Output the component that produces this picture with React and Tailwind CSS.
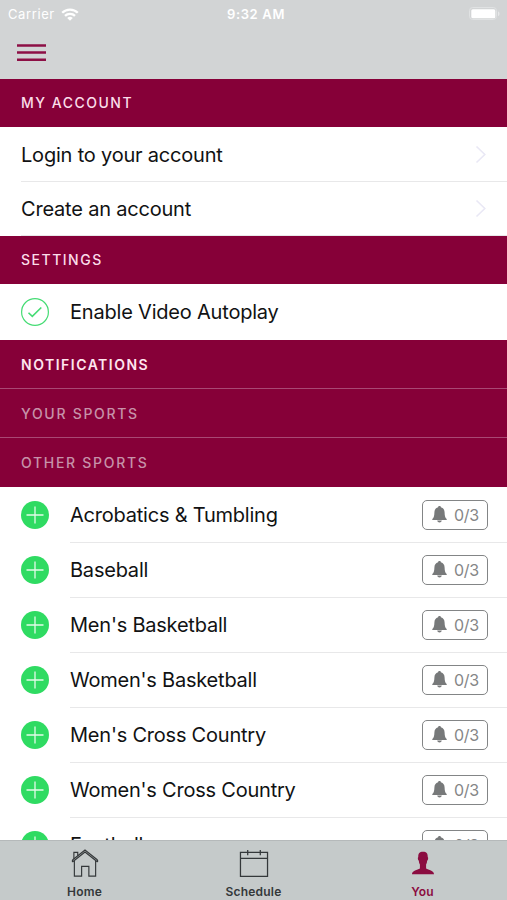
const sports = [
  "Acrobatics & Tumbling",
  "Baseball",
  "Men's Basketball",
  "Women's Basketball",
  "Men's Cross Country",
  "Women's Cross Country",
  "Football",
];

function StatusBar() {
  return (
    <div className="grid h-7 grid-cols-3 items-center pl-2 pr-[7px] text-[13px] text-white">
      <div className="flex items-center gap-[6px]">
        <span className="tracking-[0.6px]">Carrier</span>
        <svg width="18" height="13" viewBox="0 0 18 13" fill="none" stroke="white" strokeWidth="2.3">
          <path d="M1.2 4.8a11 11 0 0 1 15.6 0" />
          <path d="M4 7.9a7 7 0 0 1 10 0" />
          <path d="M6.2 10.1a4 4 0 0 1 5.6 0L9 12.8z" fill="white" stroke="none" />
        </svg>
      </div>
      <span className="pl-1 text-center font-semibold tracking-[0.65px]">9:32 AM</span>
      <svg className="justify-self-end" width="31" height="14" viewBox="0 0 31 14">
        <rect x="0.5" y="0.5" width="27" height="12" rx="3.2" fill="none" stroke="#e0e2e3" />
        <rect x="2.3" y="2.3" width="24" height="9" rx="1.5" fill="white" />
        <path d="M29 4.5c2 .5 2 4 0 4.500z" fill="#e6e7e8" />
      </svg>
    </div>
  );
}

function Section({ children, className }) {
  return (
    <div className={`flex shrink-0 items-center bg-[#860038] pl-[21px] text-[14px] ${className}`}>
      {children}
    </div>
  );
}

function AccountRow({ label, className }) {
  return (
    <div className={`ml-[21px] flex shrink-0 items-center justify-between border-b border-[#e8e8e9] pr-[20px] ${className}`}>
      <span className="pt-px text-[20px] tracking-[-0.2px]">{label}</span>
      <svg width="12" height="19" viewBox="0 0 12 19" fill="none" stroke="#e9e8f5" strokeWidth="1.6">
        <path d="M1.500 1.500 9.800 9.500 1.500 17.500" />
      </svg>
    </div>
  );
}

function Bell() {
  return (
    <svg width="15" height="17" viewBox="0 0 15 17" fill="#77797a">
      <path d="M7.500 0c.9 0 1.300.5 1.400 1.300 2.500.7 3.600 2.600 3.700 5.100.1 3.200.5 5.200 2.100 6.500v1H.3v-1c1.600-1.300 2-3.300 2.100-6.500.1-2.500 1.200-4.400 3.700-5.100C6.200.5 6.600 0 7.500 0Z" />
      <path d="M5.200 14.600h4.600c-.2 1.300-1.100 2-2.300 2s-2.100-.7-2.300-2Z" />
    </svg>
  );
}

function SportRow({ name }) {
  return (
    <div className="flex h-[55px] shrink-0 pl-[21px]">
      <div className="flex w-[49px] shrink-0 items-center">
        <svg width="28" height="28" viewBox="0 0 28 28">
          <circle cx="14" cy="14" r="14" fill="#2fdb62" />
          <path d="M14 5.500v17M5.500 14h17" stroke="#e2fbe8" strokeWidth="1.300" />
        </svg>
      </div>
      <div className="flex h-[56px] flex-1 items-center justify-between border-b border-[#e8e8e9] pr-[19px]">
        <span className="pt-px text-[20px] tracking-[-0.22px]">{name}</span>
        <span className="flex h-[30px] w-[66px] items-center gap-2 rounded-[5px] border border-[#838586] pl-[9px] text-[16px] text-[#858687]">
          <Bell />
          <span className="-ml-px tracking-[-0.3px]">0/3</span>
        </span>
      </div>
    </div>
  );
}

function Tab({ label, children, className }) {
  return (
    <div className={`flex flex-1 flex-col items-center pt-2 text-[12px] font-semibold ${className}`}>
      {children}
      <span className="mt-[6px] leading-[16px] tracking-[0.2px]">{label}</span>
    </div>
  );
}

export default function App() {
  return (
    <div className="flex h-[900px] w-[507px] flex-col overflow-hidden bg-white font-[Inter,'Liberation_Sans',sans-serif] leading-none text-[#111213]">
      <header className="h-[79px] shrink-0 bg-[#d2d4d5]">
        <StatusBar />
        <svg className="ml-[17px] mt-4" width="29" height="19" viewBox="0 0 29 19" stroke="#8d0f45" strokeWidth="2.5">
          <path d="M0 1.500h29M0 8.600h29M0 15.800h29" />
        </svg>
      </header>

      <main className="flex min-h-0 flex-1 flex-col overflow-hidden">
        <Section className="h-[48px] font-medium tracking-[1.5px] text-[#fbdde9]">MY ACCOUNT</Section>
        <AccountRow className="h-[55px]" label="Login to your account" />
        <AccountRow className="h-[54px]" label="Create an account" />
        <Section className="h-[48px] font-medium tracking-[1.5px] text-[#fbdde9]">SETTINGS</Section>
        <div className="flex h-[56px] shrink-0 items-center gap-[21px] pl-[21px]">
          <svg width="28" height="28" viewBox="0 0 28 28" fill="none" stroke="#45dc74">
            <circle cx="14" cy="14" r="13.400" strokeWidth="1.200" />
            <path d="M7.500 14.700 11.300 18.400 20.300 9.500" strokeWidth="1.600" />
          </svg>
          <span className="text-[20px] tracking-[-0.2px]">Enable Video Autoplay</span>
        </div>
        <Section className="h-[49px] border-b border-[#a94874] pt-px font-semibold tracking-[1.5px] text-[#ffe6ef]">NOTIFICATIONS</Section>
        <Section className="h-[49px] border-b border-[#a94874] pt-px font-medium tracking-[1.7px] text-[#c792a9]">YOUR SPORTS</Section>
        <Section className="h-[49px] pt-px font-medium tracking-[1.7px] text-[#c792a9]">OTHER SPORTS</Section>
        {sports.map((name) => (
          <SportRow key={name} name={name} />
        ))}
      </main>

      <nav className="flex h-[60px] shrink-0 border-t border-[#b5b9ba] bg-[#c5caca] text-[#34383a]">
        <Tab label="Home">
          <svg width="28" height="30" viewBox="0 0 28 30" fill="none" stroke="currentColor" strokeWidth="1.200">
            <path d="M1 13.500 14 3.200 27 13.500M1 11.300 14 1l13 10.300M1 11.300v2.200M27 11.300v2.200" />
            <path d="M2.500 10V3.500h4V7M3 12.500V28h7.500V18h7.500v10H25V12.500" />
          </svg>
        </Tab>
        <Tab label="Schedule">
          <svg width="30" height="30" viewBox="0 0 30 30" fill="none" stroke="currentColor" strokeWidth="1.300">
            <path d="M1 3.500h28v24.800H1zM1 9.600h28M8.500 1v5.500M21.500 1v5.500" />
          </svg>
        </Tab>
        <Tab label="You" className="text-[#8b0c40]">
          <svg width="24" height="30" viewBox="0 0 24 30" fill="currentColor">
            <path d="M12 2.800c3.600 0 5.100 1.800 4.900 5.600.8.300.5 3.300-.6 3.700-.2 1.800-.5 3-1.100 3.900v4.100c2.500 1.900 8.200 1.700 8.200 6.100H.6c0-4.400 5.700-4.200 8.200-6.100V16c-.6-.9-.9-2.100-1.100-3.900-1.100-.4-1.400-3.400-.6-3.700-.2-3.800 1.300-5.600 4.900-5.600Z" />
          </svg>
        </Tab>
      </nav>
    </div>
  );
}
